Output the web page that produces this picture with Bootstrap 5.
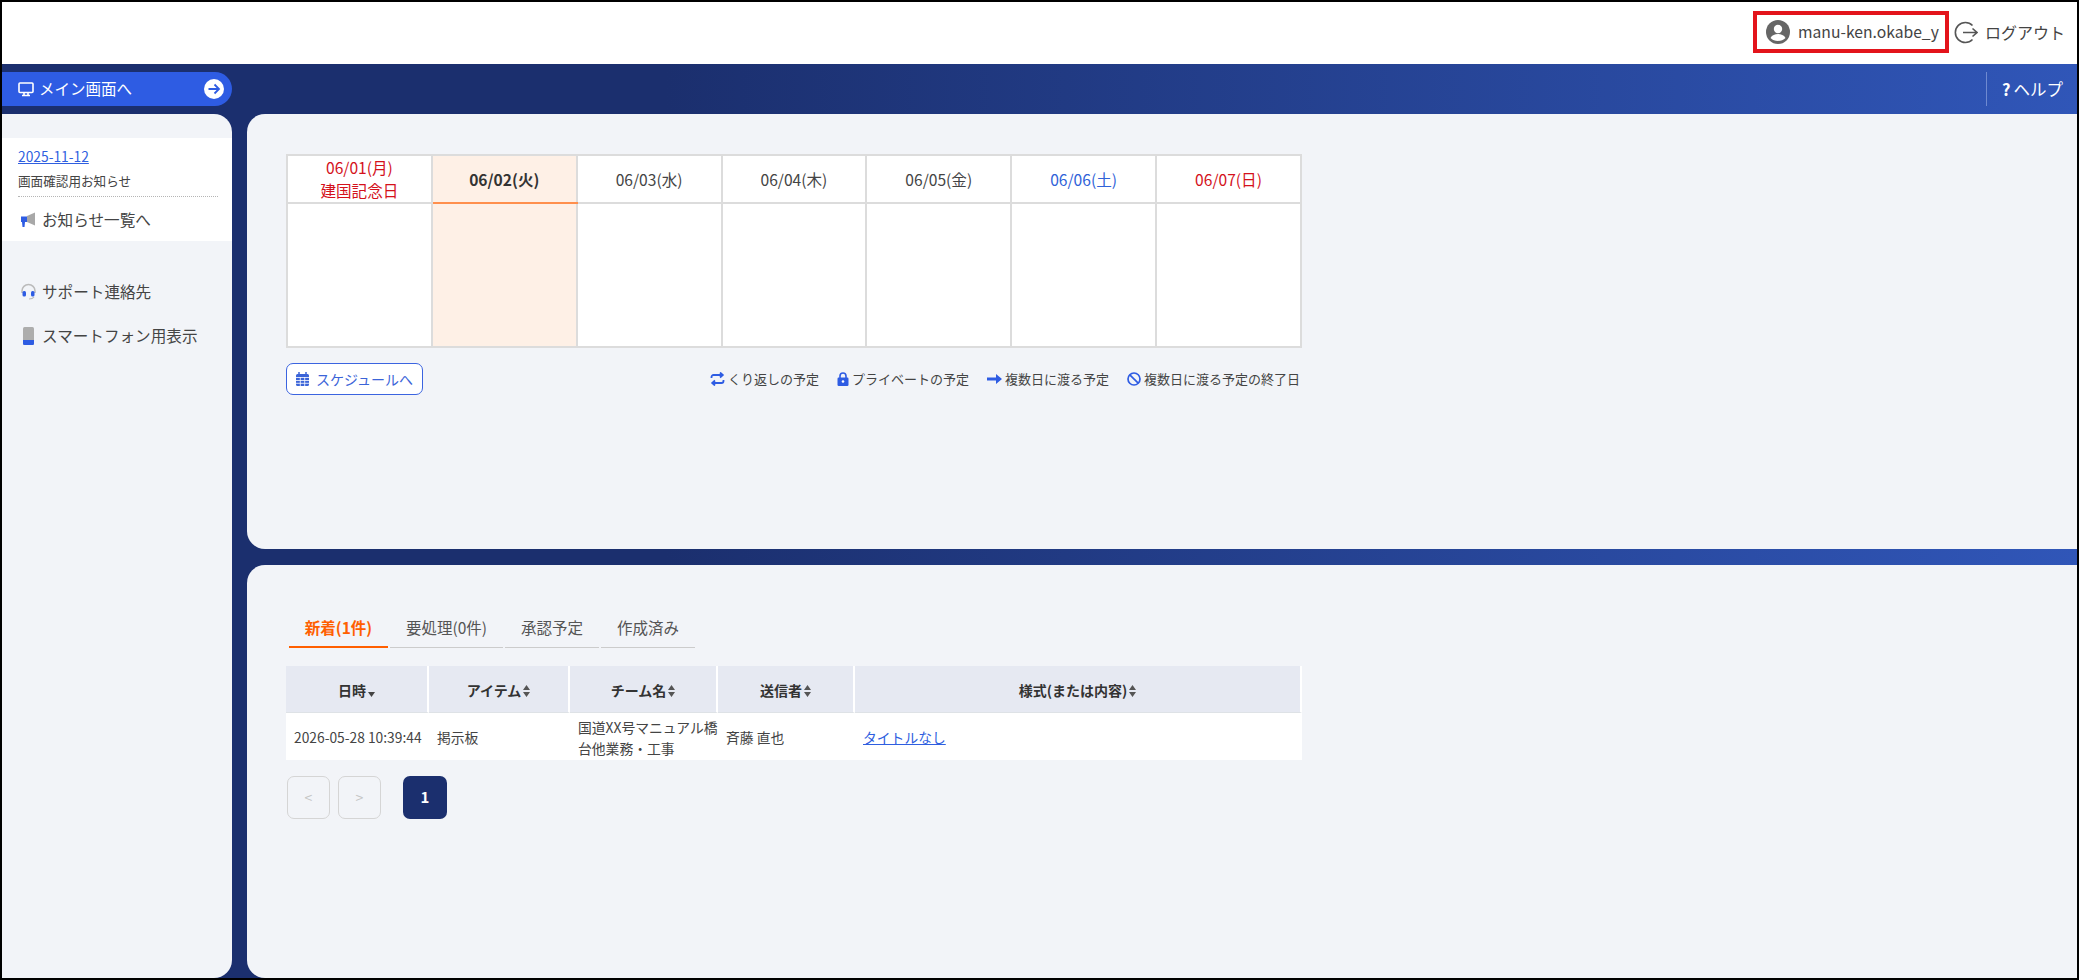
<!DOCTYPE html>
<html lang="ja">
<head>
  <meta charset="UTF-8" />
  <title>メイン画面</title>
  <meta name="viewport" content="width=device-width, initial-scale=1" />
  <link href="https://cdn.jsdelivr.net/npm/bootstrap@5.3.0/dist/css/bootstrap.min.css" rel="stylesheet" />
  <style>
    html, body { height: 100%; }
    body { font-family: "Noto Sans CJK JP", "Noto Sans", sans-serif; font-size: 14px; color: #333; overflow: hidden; }
    a { color: #2f5fe0; }
    .frame { height: 980px; border: 2px solid #000; display: flex; flex-direction: column; background: linear-gradient(90deg, #1b2f6e 0, #1b2f6e 32%, #3056b8 100%); }
    .top-head { height: 62px; background: #fff; padding-right: 12px; }
    .user-box { width: 196px; height: 42px; border: 4px solid #e3141b; margin-right: 4px; padding-left: 9px; font-size: 15.7px; color: #444; margin-top: -2px; white-space: nowrap; }
    .logout { font-size: 16px; color: #444; gap: 7px; width: 112px; margin-top: -2px; }
    .band { height: 50px; flex: none; }
    .main-link { width: 230px; height: 34px; margin-top: 8px; background: #2e5ce3; color: #fff; border-radius: 0 17px 17px 0; font-size: 15.5px; padding: 0 8px 0 16px; text-decoration: none; }
    .main-link svg:first-child { margin-right: 5px; }
    .help-link { height: 34px; margin-top: 8px; border-left: 1px solid #6f8ad0; color: #fff; padding-left: 15px; padding-right: 12px; width: 91px; font-size: 16.5px; white-space: nowrap; }
    .help-link b { margin-right: 3px; }
    .body-row { flex: 1; min-height: 0; gap: 15px; }
    .side-col { width: 230px; background: #f2f4f8; border-radius: 0 18px 18px 0; padding-top: 24px; flex: none; }
    .notice { background: #fff; padding: 8px 14px 0 16px; height: 103px; }
    .notice-date { font-size: 13.8px; line-height: 22px; display: block; margin-top: -1px; }
    .notice-text { font-size: 12.6px; line-height: 18px; margin-top: 5px; padding-bottom: 6px; border-bottom: 1px dotted #b5b5b5; margin-bottom: 0; color: #444; }
    .side-item { font-size: 15.6px; color: #444; gap: 5px; padding-left: 18px; line-height: 23px; }
    .notice .side-item { padding-left: 2px; margin-top: 11px; }
    .side-item.gap-a { margin-top: 39px; }
    .side-item.gap-b { margin-top: 21px; }
    .main-col { flex: 1; min-width: 0; gap: 16px; }
    .panel-top { height: 435px; background: #f2f4f8; border-radius: 18px 0 0 18px; padding: 40px 0 0 39px; flex: none; }
    .panel-low { flex: 1; background: #f2f4f8; border-radius: 18px 0 0 18px; padding: 44px 0 0 39px; }
    .cal-table { width: 1016px; table-layout: fixed; border-collapse: collapse; background: #fff; margin: 0; }
    .cal-table th, .cal-table td { border: 2px solid #dcdcdc; text-align: center; font-weight: 400; padding: 0; vertical-align: middle; }
    .cal-table th { height: 48px; font-size: 15.6px; line-height: 23px; color: #444; }
    .cal-table td { height: 144px; }
    .cal-table .day-red { color: #d4111b; }
    .cal-table .day-blue { color: #2f62d8; }
    .cal-table .day-now { background: #fef0e6; font-weight: 700; color: #333; }
    .cal-table th.day-now { border-bottom-color: #ff8f4d; }
    .cal-foot { width: 1016px; margin-top: 15px; }
    .sched-btn { width: 137px; height: 32px; background: #fff; border: 1.5px solid #3b64e0; border-radius: 7px; color: #3b64d8; font-size: 14px; gap: 7px; padding: 0; }
    .legend { font-size: 13px; gap: 18px; color: #444; padding-right: 2px; }
    .legend span { display: inline-flex; align-items: center; gap: 3px; }
    .tab-strip { gap: 2px; width: 410px; padding-left: 3px; }
    .tab-item { height: 39px; border-bottom: 1.5px solid #ccc; font-size: 15.5px; color: #555; text-align: center; line-height: 36px; text-decoration: none; }
    .tab-item.on { border-bottom: 2px solid #ff5f00; color: #ff5f00; font-weight: 700; }
    .msg-table { width: 1016px; table-layout: fixed; margin: 18px 0 0; border-collapse: separate; border-spacing: 0; font-size: 13.8px; }
    .msg-table th { height: 47px; background: #e6e9f2; text-align: center; font-size: 14px; font-weight: 700; border-right: 2px solid #fff; vertical-align: middle; padding: 2px 0 0; color: #333; }
    .msg-table td { height: 47px; background: #fff; padding: 2px 0 0 8px; line-height: 21px; vertical-align: middle; color: #444; border: 0; }
    .sort-mark { display: inline-block; margin-left: 2px; vertical-align: -1px; }
    .pager { margin: 16px 0 0 1px; }
    .pager span { width: 43px; height: 43px; border-radius: 7px; display: flex; align-items: center; justify-content: center; }
    .pager .off { border: 1.5px solid #d5d5d5; color: #c4c4c4; margin-right: 8px; }
    .pager .now { background: #1b2f6e; color: #fff; font-weight: 700; font-size: 15px; margin-left: 14px; width: 44px; }
  </style>
</head>
<body>
<div class="frame">
  <div class="top-head d-flex justify-content-end align-items-center flex-none">
    <div class="user-box d-flex align-items-center gap-2">
      <svg width="24" height="24" viewBox="0 0 24 24"><circle cx="12" cy="12" r="12" fill="#666"/><circle cx="12" cy="9" r="4.2" fill="#fff"/><path d="M4.5 18c1.5-3 4.5-4 7.5-4s6 1 7.5 4c-2 2-4.500 3-7.500 3s-5.500-1-7.500-3z" fill="#fff"/></svg>
      <span>manu-ken.okabe_y</span>
    </div>
    <div class="logout d-flex align-items-center">
      <svg width="25" height="25" viewBox="0 0 25 25" fill="none" stroke="#555" stroke-width="1.6"><path d="M19.500 5.500a10 10 0 1 0 0 14"/><path d="M10 12.500h14M19.500 8.500l4.500 4-4.500 4"/></svg>
      <span>ログアウト</span>
    </div>
  </div>
  <div class="band d-flex justify-content-between">
    <a class="main-link d-flex align-items-center" href="#">
      <svg width="16" height="15" viewBox="0 0 16 15" fill="none" stroke="#fff" stroke-width="1.6"><rect x="1" y="1" width="14" height="9.500" rx="1"/><path d="M4 13.500h8M6 11v2M10 11v2"/></svg>
      <span class="flex-grow-1">メイン画面へ</span>
      <svg width="20" height="20" viewBox="0 0 20 20"><circle cx="10" cy="10" r="10" fill="#fff"/><path d="M4.500 10h10M10.500 5.500l4.500 4.500-4.500 4.500" fill="none" stroke="#2e5ce3" stroke-width="1.800"/></svg>
    </a>
    <div class="help-link d-flex align-items-center"><b>?</b>ヘルプ</div>
  </div>
  <div class="body-row d-flex">
    <aside class="side-col">
      <div class="notice">
        <a class="notice-date" href="#">2025-11-12</a>
        <p class="notice-text">画面確認用お知らせ</p>
        <div class="side-item d-flex align-items-center">
          <svg width="17" height="16" viewBox="0 0 17 16"><path d="M7 4l8-3.500v13L7 10z" fill="#a8a8a8"/><path d="M1 4.500h6v5.500H5l-.5 5H2.500L2 10H1z" fill="#2e5ce3"/></svg>
          <span>お知らせ一覧へ</span>
        </div>
      </div>
      <div class="side-item gap-a d-flex align-items-center">
        <svg width="17" height="17" viewBox="0 0 17 17" fill="none"><path d="M2 10V8a6.500 6.500 0 0 1 13 0v2" stroke="#bbb" stroke-width="1.500"/><rect x="2.500" y="8" width="3.500" height="5.500" rx="1.500" fill="#2e5ce3"/><rect x="11" y="8" width="3.500" height="5.500" rx="1.500" fill="#2e5ce3"/><path d="M14 14c-1 1.500-3 2-5 2" stroke="#bbb" stroke-width="1.200"/></svg>
        <span>サポート連絡先</span>
      </div>
      <div class="side-item gap-b d-flex align-items-center">
        <svg width="17" height="18" viewBox="0 0 17 18"><rect x="3" y="0" width="11" height="18" rx="1.500" fill="#adadad"/><path d="M3 13h11v3.500a1.500 1.500 0 0 1-1.500 1.500h-8A1.500 1.500 0 0 1 3 16.500z" fill="#2e5ce3"/></svg>
        <span>スマートフォン用表示</span>
      </div>
    </aside>
    <main class="main-col d-flex flex-column">
      <section class="panel-top">
        <table class="cal-table table">
          <tr>
            <th class="day-red">06/01(月)<br>建国記念日</th>
            <th class="day-now">06/02(火)</th>
            <th>06/03(水)</th>
            <th>06/04(木)</th>
            <th>06/05(金)</th>
            <th class="day-blue">06/06(土)</th>
            <th class="day-red">06/07(日)</th>
          </tr>
          <tr><td></td><td class="day-now"></td><td></td><td></td><td></td><td></td><td></td></tr>
        </table>
        <div class="cal-foot d-flex justify-content-between align-items-center">
          <button class="sched-btn btn d-flex align-items-center justify-content-center" type="button">
            <svg width="13" height="14" viewBox="0 0 13 14"><path d="M1.500 2h10A1.500 1.500 0 0 1 13 3.500v9a1.500 1.500 0 0 1-1.500 1.500h-10A1.500 1.500 0 0 1 0 12.500v-9A1.500 1.500 0 0 1 1.500 2z" fill="#3b64d8"/><path d="M3 0v3M10 0v3" stroke="#3b64d8" stroke-width="1.500"/><path d="M0 5.500h13M0 8.500h13M0 11.300h13M4.300 5v9M8.700 5v9" stroke="#fff" stroke-width=".8"/></svg>
            <span>スケジュールへ</span>
          </button>
          <div class="legend d-flex">
            <span><svg width="15" height="14" viewBox="0 0 15 14" fill="none" stroke="#2e5ce3" stroke-width="1.800"><path d="M1.500 6V5a2 2 0 0 1 2-2H12M10 .5L12.800 3 10 5.500M13.500 8v1a2 2 0 0 1-2 2H3M5 8.500L2.200 11 5 13.500"/></svg>くり返しの予定</span>
            <span><svg width="12" height="14" viewBox="0 0 12 14"><rect x="0.500" y="5.500" width="11" height="8.500" rx="1.200" fill="#2e5ce3"/><path d="M3 6V4a3 3 0 0 1 6 0v2" fill="none" stroke="#2e5ce3" stroke-width="1.600"/><circle cx="6" cy="9.500" r="1.300" fill="#fff"/></svg>プライベートの予定</span>
            <span><svg width="15" height="12" viewBox="0 0 15 12"><path d="M0 4.500h9V1l6 5-6 5V7.500H0z" fill="#2e5ce3"/></svg>複数日に渡る予定</span>
            <span><svg width="14" height="14" viewBox="0 0 14 14" fill="none" stroke="#2e5ce3" stroke-width="1.700"><circle cx="7" cy="7" r="6"/><path d="M2.800 2.800l8.400 8.400"/></svg>複数日に渡る予定の終了日</span>
          </div>
        </div>
      </section>
      <section class="panel-low">
        <div class="tab-strip d-flex">
          <a class="tab-item on" href="#" style="width: 99px">新着(1件)</a>
          <a class="tab-item" href="#" style="width: 113px">要処理(0件)</a>
          <a class="tab-item" href="#" style="width: 94px">承認予定</a>
          <a class="tab-item" href="#" style="width: 94px">作成済み</a>
        </div>
        <table class="msg-table table">
          <colgroup><col style="width: 143px"><col style="width: 141px"><col style="width: 148px"><col style="width: 137px"><col></colgroup>
          <tr>
            <th>日時<svg class="sort-mark" width="7" height="5" viewBox="0 0 7 5"><path d="M0 0h7L3.500 5z" fill="#444"/></svg></th>
            <th>アイテム<svg class="sort-mark" width="7" height="12" viewBox="0 0 7 12"><path d="M3.500 0L7 5H0zM0 7h7l-3.500 5z" fill="#555"/></svg></th>
            <th>チーム名<svg class="sort-mark" width="7" height="12" viewBox="0 0 7 12"><path d="M3.500 0L7 5H0zM0 7h7l-3.500 5z" fill="#555"/></svg></th>
            <th>送信者<svg class="sort-mark" width="7" height="12" viewBox="0 0 7 12"><path d="M3.500 0L7 5H0zM0 7h7l-3.500 5z" fill="#555"/></svg></th>
            <th>様式(または内容)<svg class="sort-mark" width="7" height="12" viewBox="0 0 7 12"><path d="M3.500 0L7 5H0zM0 7h7l-3.500 5z" fill="#555"/></svg></th>
          </tr>
          <tr>
            <td>2026-05-28 10:39:44</td>
            <td>掲示板</td>
            <td>国道XX号マニュアル橋台他業務・工事</td>
            <td>斉藤 直也</td>
            <td><a href="#">タイトルなし</a></td>
          </tr>
        </table>
        <div class="pager d-flex">
          <span class="off">&lt;</span>
          <span class="off">&gt;</span>
          <span class="now">1</span>
        </div>
      </section>
    </main>
  </div>
</div>
<script src="https://cdn.jsdelivr.net/npm/bootstrap@5.3.0/dist/js/bootstrap.bundle.min.js"></script>
</body>
</html>
